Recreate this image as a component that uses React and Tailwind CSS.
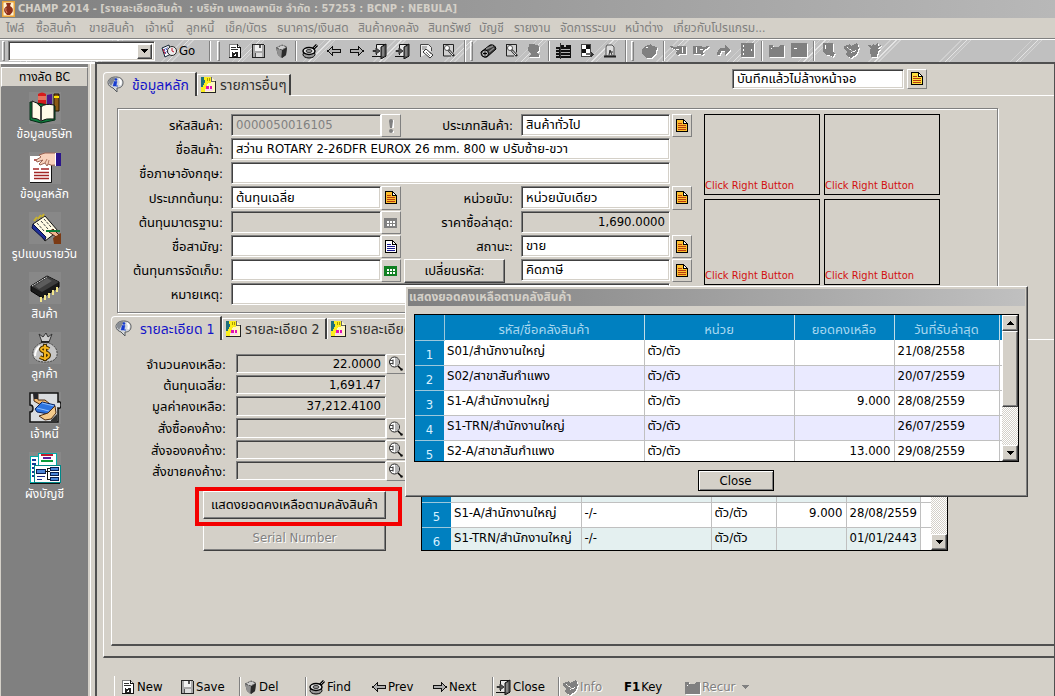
import clsx from 'clsx';

const SUNKEN = 'border border-t-[#808080] border-l-[#808080] border-r-white border-b-white shadow-[inset_1px_1px_0_#404040,inset_-1px_-1px_0_#d4d0c8]';
const RAISED = 'border border-t-white border-l-white border-r-[#404040] border-b-[#404040] shadow-[inset_-1px_-1px_0_#808080] bg-[#d4d0c8]';
const FLAT = 'border border-t-white border-l-white border-r-[#808080] border-b-[#808080] bg-[#d4d0c8]';
const DITHER = 'bg-[repeating-conic-gradient(#ffffff_0_25%,#d4d0c8_0_50%)] bg-[length:2px_2px]';
const STREAKS = 'bg-[repeating-linear-gradient(135deg,#c0c0c0_0_30px,#d0d0d0_30px_31px,#c0c0c0_31px_34px,#e4e4e4_34px_35px,#c4c4c4_35px_37px,#d4d4d4_37px_38px,#c0c0c0_38px_50px)]';

function Svg({ w = 16, h = w, box, children, smooth }) {
    return (
        <svg width={w} height={h} viewBox={box || `0 0 ${w} ${h}`} fill="none" className="shrink-0" shapeRendering={smooth ? 'auto' : 'crispEdges'} aria-hidden="true">
            {children}
        </svg>
    );
}

/* ---------- small glyphs ---------- */

const Arrow = ({ up }) => (
    <Svg w={7} h={4}><path d={up ? 'M0 4h7v-1h-1v-1h-1v-1h-1v-1h-1v1h-1v1h-1v1h-1z' : 'M0 0h7v1h-1v1h-1v1h-1v1h-1v-1h-1v-1h-1v-1h-1z'} fill="#000" /></Svg>
);

const Doc = ({ fill = '#fcc030', line = '#b83c10', edge = '#000' }) => (
    <Svg w={14}>
        <path d="M1.500 .5h7l4 4v8h-11z" fill={fill} stroke={edge} />
        <path d="M8.500 .5v4h4z" fill="#fff" stroke={edge} />
        <path d="M3 4.500h4M3 6.500h8M3 8.500h8M3 10.500h8" stroke={line} />
    </Svg>
);

const Calc = ({ color }) => (
    <Svg w={14} h={12}>
        <rect y="1" width="13" height="10" rx="1" fill={color} />
        <path d="M3 4.500h2m1 0h2m1 0h2M3 7.500h2m1 0h2m1 0h2" stroke="#fff" strokeWidth="2" />
    </Svg>
);

const Bang = () => (
    <Svg w={8} h={16} smooth>
        <path d="M5 2v8M5 13v2" stroke="#fff" strokeWidth="4" />
        <path d="M2 3q0-2 2-2t2 2l-1 7h-2z" fill="#808080" /><circle cx="4" cy="13" r="2" fill="#808080" />
    </Svg>
);

const Lens = () => (
    <Svg w={16} smooth>
        <circle cx="6.500" cy="6" r="5" fill="#fff" stroke="#222" />
        <path d="M7 2q4 0 4 4T7 10z" fill="#b4b4b4" />
        <path d="M5 3.500v5" stroke="#222" /><path d="M2 4.500h3M2 7.500h3" stroke="#444" />
        <path d="M10 10l3 3" stroke="#000" strokeWidth="1.500" /><circle cx="13.500" cy="13.500" r="1.300" fill="#111" />
    </Svg>
);

const InfoBubble = () => (
    <Svg w={17} smooth>
        <path d="M8.500 1C4 1 1 3.500 1 6.500S3.500 11 6 12l4 4v-4c4 0 6-2 6-5.500S13 1 8.500 1z" fill="#d3d7db" stroke="#55585c" />
        <path d="M3 3q3-2 6-1L4 10Q0 6 3 3z" fill="#868b92" />
        <path d="M12 3q3 2 1 6" stroke="#fff" strokeWidth="2" />
        <circle cx="9" cy="3.500" r="1.300" fill="#173cd0" /><path d="M7 5.500h3L9 10h2H6l1-3.500z" fill="#173cd0" stroke="#173cd0" strokeWidth=".5" />
    </Svg>
);

const TabPage = () => (
    <Svg w={15} h={16}>
        <path d="M0 0h10l4 4v11H0z" fill="#fff8c0" /><path d="M0 0h10v6H7l-3 9H0z" fill="#fbee1c" />
        <path d="M0 0h3v3h1v3H3v2H2v2H0z" fill="#1c6f7c" />
        <path d="M6 1h1v3H6zM8 1h1v3H8z" fill="#a89c00" />
        <path d="M5 9h3v3H5zM9 9h2v3H9z" fill="#e012b4" /><path d="M4 12h8v2H4z" fill="#fbd4f0" />
        <path d="M10.500 0v4h4" stroke="#666" /><path d="M14.500 4v11.500M0 15.500h15" stroke="#222" />
    </Svg>
);

const Vase = () => (
    <Svg w={13} h={16} smooth>
        <rect width="13" height="16" fill="#e8a33a" /><rect x="1.500" y="1.500" width="10" height="13" fill="#fff0cf" />
        <path d="M4 2h5l-1 3q4 2 2.500 6L8 14H5l-2.500-3Q1 7 5 5z" fill="#8e2f1c" /><path d="M4 7q-1 2 1 5" stroke="#d98062" />
    </Svg>
);

/* ---------- sidebar pictures ---------- */

const Books = () => (
    <Svg w={32} smooth>
        <path d="M9 2q4-3 8 0v13H9z" fill="#d61c1c" /><path d="M9 5h8M9 7h8" stroke="#f6c8a0" />
        <path d="M18 3l5-1v17h-5z" fill="#4b1a8c" /><path d="M25 2h5v17h-5z" fill="#8c5a16" stroke="#241400" /><path d="M25 5h5" stroke="#ffe100" strokeWidth="2" />
        <path d="M1 10v18l11 3 14-3V14z" fill="#0e7d3d" stroke="#052d16" />
        <path d="M3 9q5 1 9 6v14q-4-3-9-3zM12 15q4-4 13-2v14q-8-1-13 2z" fill="#fffbe8" stroke="#111" /><path d="M12 15v14" stroke="#444" strokeWidth="1.500" />
    </Svg>
);

const HandPage = () => (
    <Svg w={32} smooth>
        <path d="M1 4h21v26H1z" fill="#fff" /><path d="M22.500 8v22.500H1" stroke="#111" />
        <path d="M5 8h4M4 17h6M5 20.500h15M5 23.500h15M5 26.500h15M12 17h8" stroke="#a32626" strokeWidth="1.500" />
        <path d="M10 3l6-2h11v12q-5 1-8-1l-1 2-2-3-5 2-1-1 4-4-6 2-1-2 5-3z" fill="#f8d2bc" stroke="#9b6454" /><path d="M16 11l2-4M19 12l1-4" stroke="#b37660" />
        <path d="M27 1h5v13h-5z" fill="#2c158c" /><path d="M26.500 1v13" stroke="#fff" />
    </Svg>
);

const Journal = () => (
    <Svg w={32} smooth>
        <path d="M4 12l12-8 13 15-13 10z" fill="#fffbe3" stroke="#111" /><path d="M4 12l-1 4 13 12 1-3z" fill="#1f2f99" stroke="#08103f" />
        <path d="M8 11l7 8M12 9l7 8M15 7l7 8" stroke="#444" strokeDasharray="3 1" />
        <path d="M5 9l3-4M9 7l3-4M13 5l2-3" stroke="#c8b22c" strokeWidth="2" />
        <path d="M20 20l4-3 6 6v4z" fill="#f2b48e" stroke="#452010" /><path d="M24 26l8-5v11h-7z" fill="#7b3a14" /><path d="M17 19l14 0" stroke="#0b7a36" strokeWidth="2" />
    </Svg>
);

const Chip = () => (
    <Svg w={32} smooth>
        <path d="M2 14L18 4l12 6v5L13 26 2 19z" fill="#1a1a1a" stroke="#000" /><path d="M2 14L18 4l12 6-17 10z" fill="#3d3d3d" />
        <path d="M6 14L18 6l5 3-13 8z" fill="#5c5c5c" /><path d="M12 25v5M16 23v5M20 21v5M24 18v5M28 15v5" stroke="#f3e68a" strokeWidth="2" />
        <path d="M3 14L18 5" stroke="#fff" strokeDasharray="1 1" />
    </Svg>
);

const MoneyBag = () => (
    <Svg w={32} smooth>
        <path d="M10 2l4 3 3-4 2 4 4-3-3 8h-7z" fill="#ccc" stroke="#333" /><path d="M12 10h8" stroke="#222" strokeWidth="2" />
        <path d="M12 11Q3 15 4 23q1 7 12 7t12-7q1-8-8-12z" fill="#c6c6c6" stroke="#444" strokeDasharray="2 1" />
        <path d="M6 24q0-6 5-10" stroke="#fff" strokeWidth="2" />
        <path d="M20 17q-4-3-7-1t3 4 3 5-8 0M16 12v17" stroke="#473000" strokeWidth="4" />
        <path d="M20 17q-4-3-7-1t3 4 3 5-8 0M16 13v15" stroke="#f4b41c" strokeWidth="2" />
    </Svg>
);

const Handover = () => (
    <Svg w={32} smooth>
        <path d="M1 1h28v9q3-1 3 3t-3 3v14H1V20q3 0 3-3.500T1 13z" fill="#d9dcdf" stroke="#111" strokeWidth="1.500" />
        <path d="M5 2l4 0 0 6h7l5 4-9 1-7-4z" fill="#f0b870" stroke="#4d2b10" /><path d="M4 1h5v6H5z" fill="#26262a" />
        <path d="M6 17l7-7 13 3-6 9-12-2z" fill="#2e74e0" stroke="#0a225c" /><path d="M13 11l12 3M8 16l12 3" stroke="#8fc0ff" />
        <path d="M10 24l9-3 7-7 1 7-5 6-6 1z" fill="#f4ca8b" stroke="#4d2b10" /><path d="M22 28l6-6v8h-6z" fill="#333" />
    </Svg>
);

const ChartOfAccounts = () => (
    <Svg w={32}>
        <path d="M1 4h9v26H1z" fill="#fff" stroke="#0aa" /><path d="M9 1h18v14H9z" fill="#fff" stroke="#0aa" />
        <path d="M12 3h12" stroke="#c01a2e" strokeWidth="2" /><path d="M14 6h8" stroke="#5b1a9c" strokeWidth="2" /><path d="M12 9h12" stroke="#0a9b3a" strokeWidth="2" />
        <path d="M3 7.500h4M3 11.500h4M3 15.500h3M3 19.500h3M3 23.500h3" stroke="#123a94" strokeWidth="2" />
        <path d="M5 13h26v17H5z" fill="#fff" stroke="#088" /><path d="M1 31h30" stroke="#111" />
        <path d="M7 17h9v4H7zM21 15h8v3h-8zM21 20h8v3h-8zM21 25h8v3h-8z" fill="#4c84d8" stroke="#081b4d" /><path d="M16 19h5M18.500 16.500h2M18.500 16v11h2" stroke="#111" />
        <path d="M8 24.500h8M8 27.500h5" stroke="#1a2b88" />
    </Svg>
);

/* ---------- toolbar pictures ---------- */

const NewPage = () => (
    <Svg w={15} h={16}>
        <path d="M1.500 1.500h8l3 3v10h-11z" fill="#fff" stroke="#808080" /><path d="M9.500 1v3.500h3M12.500 4v10.500H1" stroke="#111" />
        <path d="M3 4.500h5M3 6.500h7" stroke="#333" /><path d="M4 9h6v5H4z" fill="#222" /><path d="M5 9h2v1H5zM5 13l2-2h1v2z" fill="#fff" />
    </Svg>
);
const Floppy = () => (
    <Svg w={15} h={16}>
        <path d="M1.500 1.500h11l1 1v12h-12z" fill="#a8a8a8" stroke="#222" /><path d="M4 2h7v6H4z" fill="#f0f0f0" /><path d="M4 10h7v4H4z" fill="#dcdcdc" /><path d="M8 2h2v3H8zM4 10h1v4H4z" fill="#555" />
    </Svg>
);
const Bin = () => (
    <Svg w={15} h={16} smooth>
        <path d="M2 5l6-3 5 2-1 8-4 3-4-3z" fill="#444" /><path d="M2 5l6 2-1 8-3-3z" fill="#909090" /><path d="M8 7l5-3-1 8-4 3z" fill="#2a2a2a" /><path d="M2 5l6-3 5 2-5 3z" fill="#ccc" stroke="#555" strokeDasharray="2 1" />
    </Svg>
);
const Find = () => (
    <Svg w={17} h={16} smooth>
        <ellipse cx="7" cy="11.500" rx="6" ry="3.500" fill="#999" stroke="#000" /><ellipse cx="7" cy="8" rx="6" ry="3.500" fill="#e4e4e4" stroke="#000" strokeWidth="1.500" />
        <ellipse cx="7" cy="8" rx="3" ry="1.500" fill="#999" stroke="#333" /><path d="M11 6l4-4" stroke="#000" strokeWidth="3" /><path d="M12 5l3-3" stroke="#999" />
    </Svg>
);
const Prev = () => <Svg w={16}><path d="M1.500 8l5-4v2.500h8v3h-8V12z" fill="#b0b0b0" stroke="#111" /></Svg>;
const Next = () => <Svg w={16}><path d="M14.500 8l-5-4v2.500h-8v3h8V12z" fill="#b0b0b0" stroke="#111" /></Svg>;
const Exit = () => (
    <Svg w={16} smooth>
        <path d="M4.500 12V1.500h9V14" fill="#e8e8e8" stroke="#111" /><path d="M9 4l5-3v12l-5 3z" fill="#5a5a5a" stroke="#111" /><path d="M11 4v9" stroke="#aaa" />
        <path d="M1 7.500h3V5l4 3-4 3V8.500H1z" fill="#555" stroke="#333" /><path d="M0 13.500h9" stroke="#111" />
    </Svg>
);
const PageFind = () => (
    <Svg w={16} smooth>
        <path d="M2.500 14V1.500h8l3 3V8" fill="#eee" stroke="#444" /><path d="M4 4h5M4 6h4" stroke="#777" /><path d="M5 9l3-3 7 6-3 3z" fill="#fff" stroke="#333" /><path d="M8 9l4 4M10 8l3 3" stroke="#777" />
    </Svg>
);
const PageLens = () => (
    <Svg w={16} smooth>
        <path d="M2 1.500h10.500V13H2z" fill="#d0d0d0" /><path d="M2 1.500h10.500v8M2.500 1v12H10" stroke="#222" /><circle cx="6" cy="5" r="2.500" fill="#fff" stroke="#555" /><path d="M7.500 7l5.500 6" stroke="#222" strokeWidth="2.500" /><path d="M8 7.500l4 4.500" stroke="#fff" />
    </Svg>
);
const Capsule = () => (
    <Svg w={17} h={16} smooth>
        <path d="M1 9l9-7q5-1 6 4l-9 8q-6 1-6-5z" fill="#3a3a3a" stroke="#000" /><path d="M6 6l7-3M9 9l5-4" stroke="#8a8a8a" strokeWidth="1.500" /><circle cx="5" cy="10.500" r="3.500" fill="#b0b0b0" stroke="#000" /><path d="M3 10.500h4M5 8.500v4" stroke="#000" />
    </Svg>
);
const Sheets = () => (
    <Svg w={17} h={16}>
        <path d="M1 4h4V2h4v2h2V2h5v13H1z" fill="#111" /><path d="M6 6.500h9M6 9.500h9M6 12.500h9M1 6.500h3M1 9.500h3M1 12.500h3" stroke="#b0b0b0" /><path d="M5.500 0v16" stroke="#333" />
    </Svg>
);
const Tiles = () => (
    <Svg w={16}><path d="M2.500 1.500h9v12h-9z" fill="#fff" stroke="#444" /><path d="M7 2h4v4H7zM3 6h4v4H3z" fill="#111" /><path d="M7 10h6v2H7z" fill="#666" /><path d="M12 9l3 2-3 3z" fill="#333" /></Svg>
);
const Lamp = () => (
    <Svg w={16} smooth><path d="M4 4l1-2h5l2 2v9H4z" fill="#ddd" stroke="#555" /><path d="M2 13.500h12" stroke="#222" strokeWidth="2" /><path d="M7 12l1-5 2 5M7 9h4" stroke="#333" /></Svg>
);

/* disabled pictures: a grey silhouette over a white offset copy */
const ghosts = {
    bust: 'M3 2h5l5 2v5l-2 1 2 3v2H3l2-3-3-3z',
    apple: 'M1 7l3-3 4-1 2-2 1 3 5 1-1 7-5 4H5l-4-4zM5 5v1h2V5z',
    left: 'M0 4l6 1 2-1h8v8h-6l-3 1-2-2 2-1-2-2-1-1-3-1zM6 7v1h3V7zM12 5v6h1V5z',
    right: 'M16 4l-6 1-2-1H0v8h6l3 1 2-2-2-1 2-2 1-1 3-1zM10 7v1H7V7zM4 5v6H3V5z',
    turn: 'M1 13q0-8 8-7V3l6 5-6 5V9q-5-1-5 4z',
    book: 'M2 1h13v14H2zM4 3v2h1V3zM4 7v2h1V7zM4 11v2h1v-2zM12 7v2h1V7z',
    folder: 'M1 3h4v2h5l3-2h3v12H1zM3 6v1h1V6z',
    card: 'M0 1h16v14H0zM3 6v1h3V6z',
    page: 'M3 1h10v9l2 1-2 4-4-2H6l-3-3zM5 3v4h1V3z',
    parcel: 'M1 4l6-2 1 2 6-3 2 5-2 6-6 4-5-3 1-4-3-2zM4 5v1l5 3V8zM8 10v1l5-2V8z',
    plant: 'M5 6L1 3h3l2 2 1-4 2 3 3-4v4l3-1-3 4h3l-3 2-1 6H5L4 9z',
};
const Ghost = ({ name }) => (
    <Svg w={17} h={17}><path d={ghosts[name]} fill="#fff" fillRule="evenodd" transform="translate(1 1)" /><path d={ghosts[name]} fill="#808080" fillRule="evenodd" /></Svg>
);
const GoIcon = () => (
    <Svg w={17} h={16} smooth>
        <path d="M1 5l7-3 2 9-6 3z" fill="#fff" stroke="#123" /><path d="M3 7l4-2M4 10l4-2" stroke="#2334a8" strokeDasharray="1 1" strokeWidth="2" /><circle cx="11" cy="8" r="4.500" fill="#eee" stroke="#222" /><path d="M11 5v3l2 1M2 6l2 5" stroke="#c01a2e" />
    </Svg>
);

/* ---------- building blocks ---------- */

const Grip = () => <span className="mx-1 h-[20px] w-[3px] shrink-0 border border-t-white border-l-white border-r-[#808080] border-b-[#808080]" />;
const Sep = () => <span className="mx-[2px] h-[20px] w-[2px] shrink-0 border-l border-r border-l-[#808080] border-r-white" />;

const tools = [
    ['สร้างใหม่', <NewPage />], ['บันทึก', <Floppy />], ['ลบ', <Bin />], '|', ['ค้นหา', <Find />], ['ก่อนหน้า', <Prev />], ['ถัดไป', <Next />], ['ออก', <Exit />],
    ['ปิดทั้งหมด', <Exit />], ['ดูเอกสาร', <PageFind />], ['ตัวอย่าง', <PageLens />], '||', ['เครื่องมือ', <Capsule />], ['แก้ไข', <PageLens />], ['ผู้ใช้', <Ghost name="bust" />], '|',
    ['รายการ', <Sheets />], ['จัดเรียง', <Tiles />], ['ช่วยเหลือ', <Lamp />], '||', ['สรุป', <Ghost name="apple" />], '|', ['ย้อน', <Ghost name="left" />],
    ['ต่อไป', <Ghost name="right" />], ['ส่งต่อ', <Ghost name="turn" />], ['สมุด', <Ghost name="book" />], '|', ['แฟ้ม', <Ghost name="folder" />], ['บัตร', <Ghost name="card" />], '|',
    ['หน้า', <Ghost name="page" />], ['พัสดุ', <Ghost name="parcel" />], ['ต้นไม้', <Ghost name="plant" />],
];

const menus = [
    ['ไฟล์', 'w-[30px]'], ['ซื้อสินค้า', 'w-[53px]'], ['ขายสินค้า', 'w-[56px]'], ['เจ้าหนี้', 'w-[41px]'], ['ลูกหนี้', 'w-[39px]'], ['เช็ค/บัตร', 'w-[52px]'],
    ['ธนาคาร/เงินสด', 'w-[81px]'], ['สินค้าคงคลัง', 'w-[70px]'], ['สินทรัพย์', 'w-[51px]'], ['บัญชี', 'w-[35px]'], ['รายงาน', 'w-[46px]'],
    ['จัดการระบบ', 'w-[65px]'], ['หน้าต่าง', 'w-[48px]'], ['เกี่ยวกับโปรแกรม...', 'w-[100px]'],
];

const shortcuts = [
    ['ข้อมูลบริษัท', Books], ['ข้อมูลหลัก', HandPage], ['รูปแบบรายวัน', Journal], ['สินค้า', Chip],
    ['ลูกค้า', MoneyBag], ['เจ้าหนี้', Handover], ['ผังบัญชี', ChartOfAccounts],
];

function Toolbar() {
    return (
        <div className={clsx('flex h-[24px] items-center overflow-hidden border-t border-[#808080] shadow-[inset_0_1px_0_#fff]', STREAKS)}>
            <span className="ml-[2px] h-[20px] w-[3px] border border-t-white border-l-white border-r-[#808080] border-b-[#808080]" />
            <div className={clsx('relative ml-[3px] h-[20px] w-[147px] bg-white', SUNKEN)}>
                <select aria-label="คำสั่ง" className="size-full appearance-none bg-transparent px-1" />
                <span className={clsx('pointer-events-none absolute top-[2px] right-[2px] flex h-[15px] w-[15px] items-center justify-center', RAISED)}><Arrow /></span>
            </div>
            <button className="ml-[6px] flex w-[46px] items-center gap-px text-[13px]"><GoIcon />Go</button>
            <Sep />
            <Grip />
            {tools.map((t, i) => {
                if (t === '|') return <Sep key={i} />;
                if (t === '||') return <span key={i} className="flex items-center pl-[4px]"><span className="h-[22px] w-[2px] border-l border-r border-l-[#808080] border-r-white" /><Grip /></span>;
                return <button key={i} aria-label={t[0]} className="flex w-[23px] shrink-0 justify-center">{t[1]}</button>;
            })}
        </div>
    );
}

function Sidebar() {
    return (
        <aside className="flex w-[95px] shrink-0 border-t-2 border-white pl-px">
            <nav className="flex-1 bg-[#808080]">
                <button className={clsx('mt-[3px] h-[20px] w-full', FLAT)}>ทางลัด BC</button>
                <ul className="pt-[5px]">
                    {shortcuts.map(([label, Pic]) => (
                        <li key={label} className="h-[60px]">
                            <a href="#" className="flex flex-col items-center text-white">
                                <span className="bg-[#888888]"><Pic /></span>
                                <span className="h-[20px] leading-[20px] whitespace-nowrap">{label}</span>
                            </a>
                        </li>
                    ))}
                </ul>
            </nav>
            <span className="ml-[2px] w-[5px] border-l border-white" />
        </aside>
    );
}

function Tab({ active, icon, children, className }) {
    return (
        <button
            role="tab"
            aria-selected={!!active}
            className={clsx(
                'flex shrink-0 items-center border-t border-l border-white border-r-2 border-r-[#404040] pl-[3px] text-[14px] whitespace-nowrap',
                active ? 'h-[24px] gap-2 rounded-tl-sm text-[#1414c8]' : 'mb-px h-[21px] gap-1 text-[#303030]',
                className
            )}
        >
            {icon}{children}
        </button>
    );
}

function Field({ id, label, value = '', wide, disabled, right, labelClass = 'pr-2' }) {
    return (
        <>
            <label htmlFor={id} className={clsx('self-center text-right whitespace-nowrap', labelClass)}>{label}:</label>
            <input
                id={id}
                defaultValue={value}
                readOnly={disabled}
                className={clsx(
                    'mb-[2px] w-full min-w-0 px-[4px] outline-none', SUNKEN,
                    wide && 'col-span-4', right && 'text-right',
                    disabled ? 'bg-[#d4d0c8]' : 'bg-white',
                    disabled && !right && 'text-[#808080]'
                )}
            />
        </>
    );
}

function Pick({ label, children, className }) {
    return <button aria-label={label} className={clsx('mb-px flex w-[20px] items-center justify-center', FLAT, className)}>{children}</button>;
}

function GoodsForm() {
    return (
        <section className="mt-3 mr-[56px] ml-[6px] flex border border-[#808080] pt-[5px] pb-[5px] text-[13px] shadow-[inset_1px_1px_0_#fff,1px_1px_0_#fff]">
            <div className="grid grid-cols-[113px_150px_20px_120px_149px_22px] grid-rows-[24px_24px_24px_25px_24px_24px_24px_24px]">
                <Field id="code" label="รหัสสินค้า" value="0000050016105" disabled />
                <Pick label="ตรวจรหัส"><Bang /></Pick>
                <Field id="kind" label="ประเภทสินค้า" value="สินค้าทั่วไป" />
                <Pick label="เลือกประเภทสินค้า" className="ml-[2px]"><Doc /></Pick>

                <Field id="name" label="ชื่อสินค้า" value="สว่าน ROTARY 2-26DFR EUROX 26 mm. 800 w ปรับซ้าย-ขวา" wide />
                <span />

                <Field id="ename" label="ชื่อภาษาอังกฤษ" wide />
                <span />

                <Field id="costtype" label="ประเภทต้นทุน" value="ต้นทุนเฉลี่ย" />
                <Pick label="เลือกประเภทต้นทุน"><Doc /></Pick>
                <Field id="unit" label="หน่วยนับ" value="หน่วยนับเดียว" />
                <Pick label="เลือกหน่วยนับ" className="ml-[2px]"><Doc /></Pick>

                <Field id="stdcost" label="ต้นทุนมาตรฐาน" disabled />
                <Pick label="คำนวณต้นทุนมาตรฐาน"><Calc color="#808080" /></Pick>
                <Field id="lastbuy" label="ราคาซื้อล่าสุด" value="1,690.0000" disabled right />
                <span />

                <Field id="common" label="ชื่อสามัญ" />
                <Pick label="เลือกชื่อสามัญ"><Doc fill="#fff" line="#1a1a90" /></Pick>
                <Field id="status" label="สถานะ" value="ขาย" />
                <Pick label="เลือกสถานะ" className="ml-[2px]"><Doc /></Pick>

                <Field id="keepcost" label="ต้นทุนการจัดเก็บ" />
                <Pick label="คำนวณต้นทุนการจัดเก็บ"><Calc color="#118022" /></Pick>
                <button className={clsx('mr-4 ml-[3px]', RAISED)}>เปลี่ยนรหัส:</button>
                <input aria-label="ภาษี" defaultValue="คิดภาษี" className={clsx('mb-[2px] w-full min-w-0 bg-white px-[4px] outline-none', SUNKEN)} />
                <Pick label="เลือกภาษี" className="ml-[2px]"><Doc /></Pick>

                <Field id="note" label="หมายเหตุ" wide />
            </div>
            <div className="ml-3 grid grid-cols-[116px_116px] grid-rows-[81px_86px] gap-1 text-[11px] text-[#d21010]">
                {[1, 2, 3, 4].map(n => (
                    <button key={n} className="flex items-end border border-black leading-4 whitespace-nowrap">Click Right Button</button>
                ))}
            </div>
        </section>
    );
}

const balances = [
    ['qty', 'จำนวนคงเหลือ', '22.0000', true], ['avg', 'ต้นทุนเฉลี่ย', '1,691.47', false], ['total', 'มูลค่าคงเหลือ', '37,212.4100', false],
    ['onorder', 'สั่งซื้อคงค้าง', '', true], ['reserved', 'สั่งจองคงค้าง', '', true], ['sold', 'สั่งขายคงค้าง', '', true],
];

function Balances() {
    return (
        <div className="w-[294px] shrink-0 text-[13px]">
            <div className="grid grid-cols-[124px_150px_20px] grid-rows-[21px_21px_22px_22px_21px_21px]">
                {balances.map(([id, label, value, lens]) => [
                    <Field key={id} id={id} label={label} value={value} disabled right labelClass="pr-[10px] leading-5" />,
                    lens ? <Pick key={id + 'b'} label={'ค้นหา ' + label}><Lens /></Pick> : <span key={id + 'b'} />,
                ])}
            </div>
            <div className="relative mt-[9px] mr-[20px] ml-[91px]">
                <button className={clsx('h-[28px] w-full whitespace-nowrap', RAISED)}>แสดงยอดคงเหลือตามคลังสินค้า</button>
                <span className="pointer-events-none absolute -top-1 -right-4 -bottom-[7px] -left-2 border-4 border-[#f40000]" />
            </div>
            <button className={clsx('mt-[6px] mr-[20px] ml-[91px] h-[26px] w-[183px] text-[#808080] [text-shadow:1px_1px_0_#fff]', RAISED)}>Serial Number</button>
        </div>
    );
}

function Scrollbar({ thumb }) {
    return (
        <div className={clsx('flex w-[16px] shrink-0 flex-col', DITHER)}>
            <button aria-label="เลื่อนขึ้น" className={clsx('flex h-[16px] items-center justify-center', RAISED)}><Arrow up /></button>
            <div className={clsx(thumb, RAISED)} />
            <button aria-label="เลื่อนลง" className={clsx('mt-auto flex h-[16px] items-center justify-center', RAISED)}><Arrow /></button>
        </div>
    );
}

function Grid({ heads, widths, rows, first = 1, alt, numeric }) {
    return (
        <table className="flex-1 table-fixed border-collapse bg-white text-left text-[13px]">
            <colgroup>{widths.map((w, i) => <col key={i} className={w} />)}<col /></colgroup>
            {heads && (
                <thead>
                    <tr className="h-[25px] bg-[#0080c0] text-[#a8d8f0]">
                        <td className="border-r border-b border-[#9cc8dc]" />
                        {heads.map(h => <th key={h} className="border-r border-[#c0dce8] pt-1 text-center font-normal leading-5">{h}</th>)}
                        <td />
                    </tr>
                </thead>
            )}
            <tbody>
                {rows.map((r, i) => (
                    <tr key={i} className={clsx('h-[25px]', (i + first) % 2 === 0 && alt)}>
                        <th className="border-b border-[#9cc8dc] bg-[#0080c0] pt-1 text-center font-normal leading-5 text-[#d8f0ff]">{r[0] && i + first}</th>
                        {r.map((c, j) => (
                            <td key={j} className={clsx('overflow-hidden border-r border-b border-[#c0c0c0] px-[3px] pb-[3px] leading-5 whitespace-nowrap', j === numeric && 'text-right')}>{c}</td>
                        ))}
                        <td className="border-b border-[#c0c0c0] bg-white" />
                    </tr>
                ))}
            </tbody>
        </table>
    );
}

const warehouseRows = [
    ['S01/สำนักงานใหญ่', 'ตัว/ตัว', '', '21/08/2558'],
    ['S02/สาขาสันกำแพง', 'ตัว/ตัว', '', '20/07/2559'],
    ['S1-A/สำนักงานใหญ่', 'ตัว/ตัว', '9.000', '28/08/2559'],
    ['S1-TRN/สำนักงานใหญ่', 'ตัว/ตัว', '', '26/07/2559'],
    ['S2-A/สาขาสันกำแพง', 'ตัว/ตัว', '13.000', '29/08/2559'],
];

const shelfRows = [
    ['', '', '', '', ''], ['', '', '', '', ''], ['', '', '', '', ''], ['', '', '', '', ''], ['', '', '', '', ''],
    ['S1-A/สำนักงานใหญ่', '-/-', 'ตัว/ตัว', '9.000', '28/08/2559'],
    ['S1-TRN/สำนักงานใหญ่', '-/-', 'ตัว/ตัว', '', '01/01/2443'],
];

function StockDialog() {
    return (
        <div role="dialog" aria-label="แสดงยอดคงเหลือตามคลังสินค้า" className={clsx('absolute top-[222px] left-[308px] w-[623px] p-[2px]', RAISED)}>
            <h2 className="h-[17px] bg-linear-to-r from-[#808080] to-[#c0c0c0] px-px text-[12px] leading-[17px] font-bold text-[#d4d0c8]">แสดงยอดคงเหลือตามคลังสินค้า</h2>
            <div className="mx-[6px] mt-[8px] flex h-[148px] overflow-hidden border border-black">
                <Grid
                    heads={['รหัส/ชื่อคลังสินค้า', 'หน่วย', 'ยอดคงเหลือ', 'วันที่รับล่าสุด']}
                    widths={['w-[29px]', 'w-[200px]', 'w-[150px]', 'w-[100px]', 'w-[105px]']}
                    rows={warehouseRows}
                    alt="bg-[#eaeaff]"
                    numeric={2}
                />
                <Scrollbar thumb="h-[76px]" />
            </div>
            <div className="flex justify-center pt-[8px] pb-[3px] pl-[38px]">
                <button className="h-[21px] w-[76px] border border-black bg-[#d4d0c8] text-[13px] shadow-[inset_1px_1px_0_#fff,inset_-1px_-1px_0_#808080]">Close</button>
            </div>
        </div>
    );
}

function ActionBar() {
    const item = 'flex items-center gap-px whitespace-nowrap';
    return (
        <div className="mt-[18px] ml-[17px] flex h-[20px] items-center border-l border-white pt-[2px] pl-[6px] text-[13px]">
            <button className={clsx(item, 'w-[59px]')}><NewPage />New</button>
            <button className={clsx(item, 'w-[57px]')}><Floppy />Save</button>
            <Sep />
            <button className={clsx(item, 'w-[60px] gap-[3px]')}><Bin />Del</button>
            <Sep />
            <button className={clsx(item, 'w-[62px] gap-[2px]')}><Find />Find</button>
            <button className={clsx(item, 'w-[61px] gap-[2px]')}><Prev />Prev</button>
            <button className={clsx(item, 'w-[58px] gap-[2px]')}><Next />Next</button>
            <Sep />
            <button className={clsx(item, 'w-[60px] gap-[2px]')}><Exit />Close</button>
            <Sep />
            <button className={clsx(item, 'w-[62px] gap-[2px] text-[#808080] [text-shadow:1px_1px_0_#fff]')}><Ghost name="parcel" />Info</button>
            <button className={clsx(item, 'w-[60px] gap-[3px]')}><b>F1</b>Key</button>
            <button className={clsx(item, 'text-[#808080] [text-shadow:1px_1px_0_#fff]')}>
                <Ghost name="folder" />Recur
                <span className="ml-[6px]"><Svg w={7} h={4}><path d="M0 0h7L3.500 4z" fill="#808080" /></Svg></span>
            </button>
        </div>
    );
}

export default function App() {
    return (
        <div className="flex h-screen flex-col overflow-hidden bg-[#d4d0c8] font-['DejaVu_Sans_Condensed','Noto_Sans_Thai',sans-serif] text-[12px] leading-4 text-black">
            <header>
                <h1 className="flex h-[18px] items-center gap-[3px] bg-linear-to-r from-[#808080] to-[#b8b8b8] pl-[2px] text-[11px] font-bold whitespace-pre text-[#d4d0c8]">
                    <Vase />CHAMP 2014 - [รายละเอียดสินค้า  : บริษัท นพดลพานิช จำกัด : 57253 : BCNP : NEBULA]
                </h1>
                <nav className="flex h-[20px] items-center pl-[6px] text-[#808080]">
                    {menus.map(([label, w]) => <button key={label} className={clsx('shrink-0 text-left whitespace-nowrap', w)}>{label}</button>)}
                </nav>
                <Toolbar />
            </header>
            <div className="flex min-h-0 flex-1">
                <Sidebar />
                <main className="relative flex min-w-0 flex-1 flex-col border-t-2 border-r border-l-2 border-[#505050]">
                    <div className="flex h-[32px] shrink-0 items-end pl-[6px]" role="tablist">
                        <Tab active icon={<InfoBubble />} className="w-[94px]">ข้อมูลหลัก</Tab>
                        <Tab icon={<TabPage />} className="w-[94px]">รายการอื่นๆ</Tab>
                        <div className="flex h-[27px] flex-1 items-start justify-end gap-[3px] border-b border-white pr-[127px]">
                            <input aria-label="โหมดบันทึก" defaultValue="บันทึกแล้วไม่ล้างหน้าจอ" className={clsx('h-[20px] w-[172px] bg-white px-[4px] text-[13px] outline-none', SUNKEN)} />
                            <Pick label="เลือกโหมดบันทึก" className="h-[20px]"><Doc fill="#fce03c" /></Pick>
                        </div>
                    </div>
                    <div className="ml-[6px] flex min-h-0 flex-1 flex-col border-b-2 border-l border-b-[#505050] border-l-white pb-[10px] pl-[7px]">
                        <GoodsForm />
                        <div className="mt-[3px] flex h-[24px] shrink-0 items-end" role="tablist">
                            <Tab active icon={<InfoBubble />} className="w-[111px]">รายละเอียด 1</Tab>
                            <Tab icon={<TabPage />} className="w-[105px]">รายละเอียด 2</Tab>
                            <Tab icon={<TabPage />} className="w-[105px]">รายละเอียด 3</Tab>
                            <span className="flex-1 self-stretch border-b border-white" />
                        </div>
                        <div className="flex min-h-0 flex-1 items-start border-b-2 border-l border-b-[#505050] border-l-white pt-[14px]">
                            <Balances />
                            <div className="mt-[22px] ml-[15px] flex h-[175px] w-[527px] overflow-hidden border border-black">
                                <Grid
                                    widths={['w-[29px]', 'w-[130px]', 'w-[130px]', 'w-[65px]', 'w-[70px]', 'w-[70px]']}
                                    rows={shelfRows}
                                    first={0}
                                    alt="bg-[#e4f0f0]"
                                    numeric={3}
                                />
                                <Scrollbar thumb="h-[60px]" />
                            </div>
                        </div>
                    </div>
                    <ActionBar />
                    <StockDialog />
                </main>
            </div>
        </div>
    );
}
